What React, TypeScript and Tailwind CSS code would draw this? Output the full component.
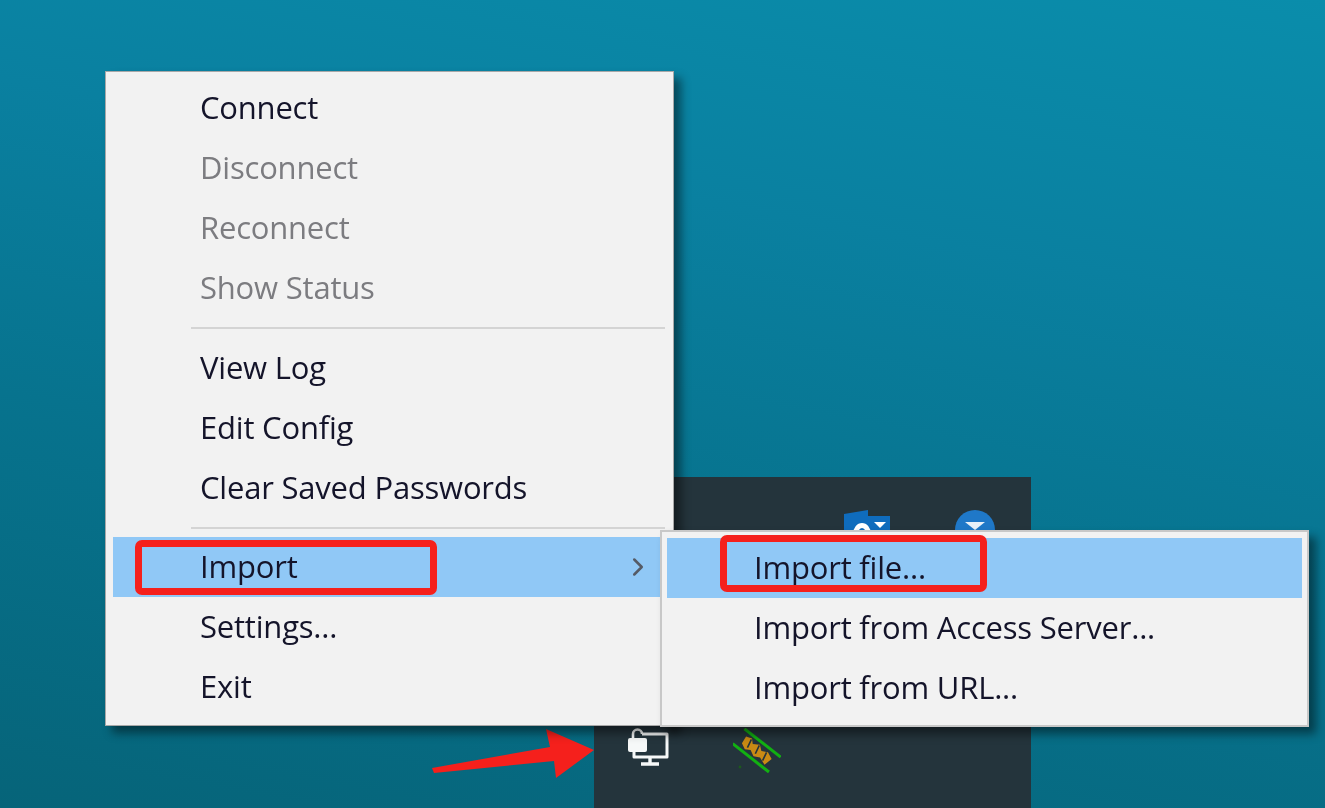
import React from 'react';
import { ChevronRight } from 'lucide-react';

const font = "font-['Open_Sans','Noto_Sans',sans-serif]";

type Row = { label: string; disabled?: boolean; active?: boolean; submenu?: boolean };

function MenuRow({ label, disabled, active, submenu }: Row) {
  return (
    <div className={`flex h-[60px] items-center pb-[1px] ${active ? 'bg-[#90c8f6]' : ''}`}>
      <span className={`text-[31px] font-medium leading-none tracking-[-0.2px] ${disabled ? 'text-[#7c7c80]' : 'text-[#14142a]'}`}>
        {label}
      </span>
      {submenu && <ChevronRight className="ml-auto mr-[13px] h-[30px] w-[30px] text-[#555b66]" strokeWidth={2} />}
    </div>
  );
}

function Separator({ tight }: { tight?: boolean }) {
  return <div className={`ml-[78px] mr-[1px] h-[2px] bg-[#d4d4d4] ${tight ? 'mt-[9px] mb-[8px]' : 'my-[9px]'}`} />;
}

function OutlookIcon() {
  return (
    <svg width="46" height="24" viewBox="0 0 46 24">
      <path d="M0 4 24 0v6h22v18H0Z" fill="#0f6cbd" />
      <path d="M9 24a9 11 0 0 1 18 0h-5a4 6 0 0 0-8 0Z" fill="#fff" />
      <path d="M30 12h12l-6 6Z" fill="#fff" />
    </svg>
  );
}

function MailBadge() {
  return (
    <svg width="40" height="24" viewBox="0 0 40 24">
      <path d="M0 20a20 20 0 0 1 40 0v4H0Z" fill="#1f78c8" />
      <path d="M10 12h20l-10 8Z" fill="#e8f0f8" />
    </svg>
  );
}

function TrayLockIcon() {
  return (
    <svg width="42" height="40" viewBox="0 0 42 40" fill="none" stroke="#f6f8f8" strokeWidth="3">
      <path d="M14 6h25v23H6v-6" strokeLinejoin="round" />
      <path d="M22 29v6M13 36h18" strokeWidth="3.4" />
      <rect x="0" y="10" width="19" height="14" rx="2" fill="#f6f8f8" stroke="none" />
      <path d="M5 10V6a4.5 4.5 0 0 1 9 0" strokeWidth="2.6" />
    </svg>
  );
}

function TrayFilmIcon() {
  return (
    <svg width="48" height="46" viewBox="0 0 48 46" fill="none">
      <g transform="rotate(38 24 22)">
        <path d="M7 18l6-2 4 4 6-4 5 4 6-3 7 3-2 9-8-3-6 3-6-3-5 3-6-3Z" fill="#c98a14" />
        <path d="M13 17l2 9M23 17l2 9M33 18l2 9" stroke="#24343c" strokeWidth="1.6" />
        <path d="M1 13h46M1 32h46" stroke="#12b012" strokeWidth="3" />
      </g>
      <circle cx="7" cy="39" r="1.4" fill="#1c5a1c" />
    </svg>
  );
}

function RedArrow() {
  return (
    <svg width="164" height="52" viewBox="0 0 164 52">
      <path d="M0 39 118 18 114 0 162 21 124 49 122 32 2 44Z" fill="#f5201c" />
    </svg>
  );
}

export default function App() {
  return (
    <div className={`relative h-[808px] w-[1325px] overflow-hidden bg-[linear-gradient(190deg,#0a8dab_0%,#0a80a0_30%,#07738e_60%,#066479_100%)] blur-[0.6px] ${font}`}>
      {/* taskbar flyout behind the menus */}
      <div className="absolute left-[594px] top-[477px] flex h-[331px] w-[437px] flex-col bg-[#24343c]">
        <div className="flex pl-[250px] pt-[33px]">
          <OutlookIcon />
          <div className="ml-[65px]">
            <MailBadge />
          </div>
        </div>
        <div className="mt-auto mb-[34px] flex items-start pl-[34px]">
          <TrayLockIcon />
          <div className="ml-[63px]">
            <TrayFilmIcon />
          </div>
        </div>
      </div>

      <div className="absolute left-[432px] top-[729px]">
        <RedArrow />
      </div>

      {/* main context menu */}
      <div className="absolute left-[105px] top-[71px] w-[569px] border border-[#a8a8a8] bg-[#f2f2f2] pl-[7px] pr-[7px] pt-[6px] pb-[8px] shadow-[7px_7px_9px_rgba(0,0,0,0.45)]">
        <div className="pl-[87px]">
          <MenuRow label="Connect" />
          <MenuRow label="Disconnect" disabled />
          <MenuRow label="Reconnect" disabled />
          <MenuRow label="Show Status" disabled />
        </div>
        <Separator />
        <div className="pl-[87px]">
          <MenuRow label="View Log" />
          <MenuRow label="Edit Config" />
          <MenuRow label="Clear Saved Passwords" />
        </div>
        <Separator tight />
        <div className="pl-[87px] bg-[#90c8f6]">
          <MenuRow label="Import" active submenu />
        </div>
        <div className="pl-[87px]">
          <MenuRow label="Settings..." />
          <MenuRow label="Exit" />
        </div>
      </div>

      {/* import submenu */}
      <div className="absolute left-[660px] top-[530px] w-[649px] border-2 border-[#c8c8c8] bg-[#f2f2f2] px-[5px] pt-[6px] pb-[7px] shadow-[7px_7px_9px_rgba(0,0,0,0.45)]">
        <div className="bg-[#90c8f6] pl-[87px]">
          <MenuRow label="Import file..." active />
        </div>
        <div className="pl-[87px]">
          <MenuRow label="Import from Access Server..." />
          <MenuRow label="Import from URL..." />
        </div>
      </div>

      {/* red annotation boxes */}
      <div className="absolute left-[135px] top-[540px] h-[55px] w-[302px] rounded-[7px] border-[7px] border-[#f5201c]" />
      <div className="absolute left-[720px] top-[535px] h-[57px] w-[267px] rounded-[7px] border-[7px] border-[#f5201c]" />
    </div>
  );
}
